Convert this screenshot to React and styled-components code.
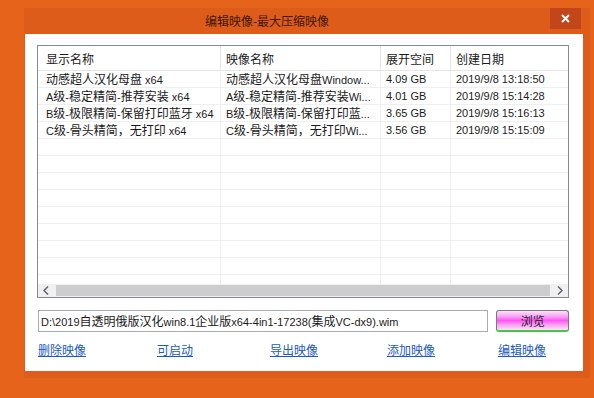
import React from 'react'
import styled, { createGlobalStyle } from 'styled-components'

const GlobalStyle = createGlobalStyle`
  html, body {
    margin: 0;
    padding: 0;
    width: 594px;
    height: 398px;
    overflow: hidden;
    background: #e6631c;
  }
  body {
    font-family: "Liberation Sans", "Noto Sans CJK SC", sans-serif;
    font-size: 11px;
    color: #1b1b1b;
  }
`

const Page = styled.div`
  padding: 8px 0 0 24px;
`

const Window = styled.div`
  width: 566px;
  height: 370px;
  background: #dd5c1a;
  display: flex;
  flex-direction: column;
`

const TitleBar = styled.div`
  height: 26px;
  display: flex;
  align-items: flex-start;
`

const Title = styled.div`
  flex: 1;
  text-align: center;
  padding-right: 40px;
  line-height: 25px;
  font-family: "Noto Sans CJK SC", sans-serif;
  font-size: 12px;
  color: #3f1603;
`

const CloseButton = styled.div`
  width: 31px;
  height: 21px;
  margin-right: 9px;
  background: #c2461a;
  display: flex;
  align-items: center;
  justify-content: center;
`

const Client = styled.div`
  background: #ffffff;
  margin: 0 7px 7px 1px;
  flex: 1;
  padding: 11px 14px 0 12px;
  display: flex;
  flex-direction: column;
`

const ListView = styled.div`
  height: 251px;
  border: 1px solid #858a93;
  display: flex;
  flex-direction: column;
`

const ListBody = styled.div`
  flex: 1;
  overflow: hidden;
`

const Row = styled.div`
  display: grid;
  grid-template-columns: 183px 160px 70px 117px;
  height: ${p => (p.$head ? 25 : 17)}px;
  border-bottom: 1px solid ${p => (p.$head ? '#e5e5e5' : '#efefef')};
  box-sizing: border-box;
`

const Cell = styled.div`
  padding-left: ${p => (p.$first ? 8 : 5)}px;
  padding-top: ${p => (p.$head ? 2 : 0)}px;
  border-right: 1px solid ${p => (p.$head ? '#e5e5e5' : '#efefef')};
  white-space: pre;
  overflow: hidden;
  line-height: ${p => (p.$head ? 22 : 16)}px;
  &:last-child {
    border-right: none;
  }
`

const Han = styled.span`
  font-family: "Noto Sans CJK SC", sans-serif;
  font-size: 12px;
`

const ScrollBar = styled.div`
  height: 13px;
  background: #f0f0f0;
  display: flex;
  align-items: center;
`

const ScrollArrow = styled.div`
  width: 16px;
  height: 13px;
  display: flex;
  align-items: center;
  justify-content: center;
`

const Thumb = styled.div`
  flex: 1;
  height: 11px;
  margin: 0 2px;
  background: #cdcdcd;
`

const PathRow = styled.div`
  display: flex;
  gap: 8px;
  margin-top: 12px;
  margin-left: 1px;
`

const PathBox = styled.div`
  width: 449px;
  height: 20px;
  border: 1px solid #a9abb2;
  padding-left: 2px;
  line-height: 20px;
  white-space: pre;
  overflow: hidden;
`

const BrowseButton = styled.div`
  width: 71px;
  height: 19px;
  border: 1px solid #7a7a7a;
  border-bottom: 2px solid #45c841;
  border-radius: 3px;
  background: linear-gradient(#fde2fb 0%, #f7a0f2 30%, #ff55f2 50%, #f7a0f2 72%, #fde2fb 100%);
  display: flex;
  align-items: center;
  justify-content: center;
  font-family: "Noto Sans CJK SC", sans-serif;
  font-size: 12px;
  color: #2b1a2b;
`

const LinkRow = styled.div`
  display: grid;
  grid-template-columns: 119px 113px 117px 111px auto;
  margin-top: 9px;
  padding-left: 1px;
`

const LinkText = styled.a`
  font-family: "Noto Sans CJK SC", sans-serif;
  font-size: 12px;
  line-height: 17px;
  color: #1d5bbf;
  text-decoration: underline;
  justify-self: start;
`

const mixed = text =>
  text.split(/([\u3000-\u9fff\uff00-\uffef]+)/).map((part, i) =>
    /[\u3000-\u9fff\uff00-\uffef]/.test(part) ? <Han key={i}>{part}</Han> : part
  )

const rows = [
  ['动感超人汉化母盘 x64', '动感超人汉化母盘Window...', '4.09 GB', '2019/9/8 13:18:50'],
  ['A级-稳定精简-推荐安装 x64', 'A级-稳定精简-推荐安装Wi...', '4.01 GB', '2019/9/8 15:14:28'],
  ['B级-极限精简-保留打印蓝牙 x64', 'B级-极限精简-保留打印蓝...', '3.65 GB', '2019/9/8 15:16:13'],
  ['C级-骨头精简，无打印 x64', 'C级-骨头精简，无打印Wi...', '3.56 GB', '2019/9/8 15:15:09'],
]

const Chevron = ({ dir }) => (
  <svg width="6" height="9" viewBox="0 0 6 9">
    <path d={dir === 'left' ? 'M5 0.5 L1 4.5 L5 8.5' : 'M1 0.5 L5 4.5 L1 8.5'} fill="none" stroke="#606060" strokeWidth="1.4" />
  </svg>
)

const App = () => {
  return (
    <>
      <GlobalStyle />
      <Page>
        <Window>
          <TitleBar>
            <Title>编辑映像-最大压缩映像</Title>
            <CloseButton>
              <svg width="9" height="9" viewBox="0 0 9 9">
                <path d="M1 1 L8 8 M8 1 L1 8" stroke="#ffffff" strokeWidth="2" />
              </svg>
            </CloseButton>
          </TitleBar>
          <Client>
            <ListView>
              <Row $head>
                {['显示名称', '映像名称', '展开空间', '创建日期'].map((h, i) => (
                  <Cell key={h} $head $first={i === 0}>{mixed(h)}</Cell>
                ))}
              </Row>
              <ListBody>
                {rows.map(r => (
                  <Row key={r[0]}>
                    {r.map((c, i) => (
                      <Cell key={i} $first={i === 0}>{mixed(c)}</Cell>
                    ))}
                  </Row>
                ))}
                {[...Array(10)].map((x, id) => (
                  <Row key={'e' + id}>
                    <Cell $first /><Cell /><Cell /><Cell />
                  </Row>
                ))}
              </ListBody>
              <ScrollBar>
                <ScrollArrow><Chevron dir="left" /></ScrollArrow>
                <Thumb />
                <ScrollArrow><Chevron dir="right" /></ScrollArrow>
              </ScrollBar>
            </ListView>
            <PathRow>
              <PathBox>{mixed('D:\\2019自透明俄版汉化win8.1企业版x64-4in1-17238(集成VC-dx9).wim')}</PathBox>
              <BrowseButton>浏览</BrowseButton>
            </PathRow>
            <LinkRow>
              {['删除映像', '可启动', '导出映像', '添加映像', '编辑映像'].map(l => (
                <LinkText key={l} href="#">{l}</LinkText>
              ))}
            </LinkRow>
          </Client>
        </Window>
      </Page>
    </>
  )
}

export default App
